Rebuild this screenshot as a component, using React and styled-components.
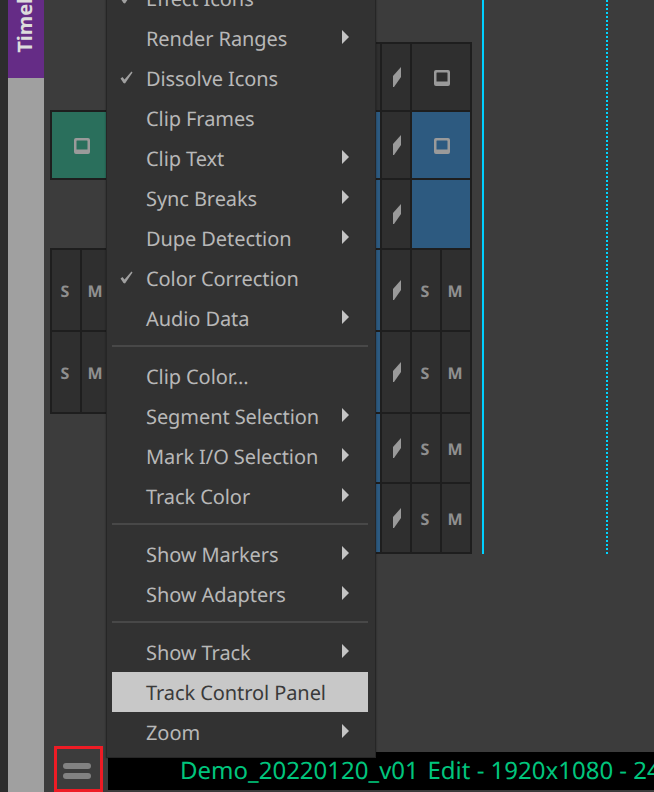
import React from "react";
import styled, { createGlobalStyle } from "styled-components";

const Global = createGlobalStyle`
  html, body { margin: 0; padding: 0; background: #3c3c3c; }
  #root { width: 654px; height: 792px; overflow: hidden; }
  * { box-sizing: border-box; }
`;

const Screen = styled.div`
  position: relative;
  display: flex;
  width: 654px;
  height: 792px;
  overflow: hidden;
  background: #3c3c3c;
  font-family: "Noto Sans", sans-serif;
  text-rendering: geometricPrecision;
`;

const Gutter = styled.div`
  width: 8px;
  background: #2d2d2d;
`;

const SideRail = styled.div`
  display: flex;
  flex-direction: column;
  width: 36px;
  background: #a0a0a0;
`;

const RailTab = styled.div`
  display: flex;
  align-items: flex-end;
  justify-content: center;
  height: 78px;
  padding: 0 3px 25px 0;
  background: #652c86;
  overflow: hidden;
`;

const RailLabel = styled.span`
  writing-mode: vertical-rl;
  transform: rotate(180deg);
  color: #dcdcdc;
  font-family: "Noto Sans", sans-serif;
  font-weight: 700;
  font-size: 20px;
  line-height: 20px;
  white-space: nowrap;
`;

const Workspace = styled.div`
  flex: 1;
  display: flex;
  flex-direction: column;
  min-width: 0;
`;

const Timeline = styled.div`
  flex: 1;
  display: flex;
  align-items: flex-start;
  padding-left: 6px;
`;

const TrackPanel = styled.div`
  display: flex;
  flex-direction: column;
  flex: none;
  width: ${(p) => p.$width}px;
  margin-top: ${(p) => p.$top}px;
  margin-left: ${(p) => p.$left || 0}px;
  background: #1e1e1e;
  padding: 2px;
  gap: 2px;
`;

const TrackRow = styled.div`
  display: flex;
  height: ${(p) => p.$height}px;
  gap: 2px;
`;

const Spacer = styled.div`
  height: ${(p) => p.$height}px;
  margin: 0 -2px;
  background: #3c3c3c;
`;

const Cell = styled.div`
  display: flex;
  align-items: center;
  justify-content: center;
  flex: ${(p) => (p.$width ? `none` : 1)};
  width: ${(p) => (p.$width ? `${p.$width}px` : "auto")};
  background: ${(p) => p.$bg || "#2f2f2f"};
`;

const SlashCell = styled(Cell)`
  padding-left: 2px;
`;

const IconCell = styled(Cell)`
  padding: 2px 0 0 2px;
`;

const ToggleCell = styled(Cell)`
  padding: 2px 2px 0 0;
  color: #8f8f8f;
  font-family: "Open Sans", sans-serif;
  font-weight: 700;
  font-size: 16px;
`;

const Marker = styled.div`
  flex: none;
  width: 2px;
  height: 554px;
  margin-left: ${(p) => p.$left}px;
  ${(p) =>
    p.$dotted
      ? "background: repeating-linear-gradient(to bottom, #00d4ff 0 2px, transparent 2px 4px);"
      : "background: #00d0ff;"}
`;

const StatusRow = styled.div`
  display: flex;
  height: 40px;
  flex: none;
  padding-left: 10px;
`;

const PanelButton = styled.div`
  display: flex;
  flex-direction: column;
  align-items: center;
  justify-content: center;
  gap: 4px;
  width: 49px;
  height: 46px;
  margin-top: -6px;
  padding: 4px 3px 0 0;
  border: 3px solid #ee1c25;
`;

const ButtonBar = styled.span`
  width: 28px;
  height: 6px;
  border-radius: 3px;
  background: #828282;
`;

const StatusTitle = styled.div`
  flex: 1;
  height: 38px;
  margin-left: 5px;
  margin-right: -4px;
  padding-left: 72px;
  background: #000;
  color: #00c57d;
  font-size: 24px;
  line-height: 38px;
  white-space: nowrap;
  overflow: hidden;
`;

const Menu = styled.div`
  position: absolute;
  left: 106px;
  top: -25px;
  width: 270px;
  padding: 2px 7px 5px 5px;
  background: #323232;
  border: 1px solid #262626;
  box-shadow: 0 0 2px rgba(0, 0, 0, 0.4);
`;

const Item = styled.div`
  position: relative;
  display: flex;
  align-items: center;
  height: 40px;
  padding-left: 34px;
  background: ${(p) => (p.$active ? "#c8c8c8" : "transparent")};
  color: ${(p) => (p.$active ? "#3a3a3a" : "#b8b8b8")};
  font-size: 20px;
  letter-spacing: -0.08px;
  white-space: nowrap;
`;

const Check = styled.svg`
  position: absolute;
  left: 8px;
  top: 13px;
  width: 13px;
  height: 13px;
`;

const Arrow = styled.span`
  position: absolute;
  right: 19px;
  top: 12px;
  width: 0;
  height: 0;
  border-left: 7px solid #c4c4c4;
  border-top: 7px solid transparent;
  border-bottom: 7px solid transparent;
`;

const Divider = styled.div`
  height: 2px;
  margin: 7px 0 9px;
  background: #484848;
`;

const TrackIcon = () => (
  <svg width="16" height="16" viewBox="0 0 16 16">
    <path
      fillRule="evenodd"
      d="M2 0 H14 A2 2 0 0 1 16 2 V14 A2 2 0 0 1 14 16 H2 A2 2 0 0 1 0 14 V2 A2 2 0 0 1 2 0 Z M3 2.5 A0.5 0.5 0 0 0 2.5 3 V11.5 H13.5 V3 A0.5 0.5 0 0 0 13 2.5 Z"
      fill="#9a9a9a"
    />
  </svg>
);

const Slash = () => (
  <svg width="8" height="20" viewBox="0 0 8 20">
    <path d="M8 0 L8 10 L1 20 L0 20 L0 9 Z" fill="#9a9a9a" />
  </svg>
);

const menuGroups = [
  [
    { label: "Effect Icons", checked: true },
    { label: "Render Ranges", sub: true },
    { label: "Dissolve Icons", checked: true },
    { label: "Clip Frames" },
    { label: "Clip Text", sub: true },
    { label: "Sync Breaks", sub: true },
    { label: "Dupe Detection", sub: true },
    { label: "Color Correction", checked: true },
    { label: "Audio Data", sub: true },
  ],
  [
    { label: "Clip Color..." },
    { label: "Segment Selection", sub: true },
    { label: "Mark I/O Selection", sub: true },
    { label: "Track Color", sub: true },
  ],
  [
    { label: "Show Markers", sub: true },
    { label: "Show Adapters", sub: true },
  ],
  [
    { label: "Show Track", sub: true },
    { label: "Track Control Panel", active: true },
    { label: "Zoom", sub: true },
  ],
];

const BLUE = "#2d5a80";
const GREEN = "#2a6f5c";

const SoloMuteRow = ({ height }) => (
  <TrackRow $height={height}>
    <Cell $width={38} $bg={BLUE} />
    <SlashCell $width={28}><Slash /></SlashCell>
    <ToggleCell>S</ToggleCell>
    <ToggleCell>M</ToggleCell>
  </TrackRow>
);

export default function App() {
  return (
    <Screen>
      <Global />
      <Gutter />
      <SideRail>
        <RailTab>
          <RailLabel>Timeline</RailLabel>
        </RailTab>
      </SideRail>
      <Workspace>
        <Timeline>
          <TrackPanel $width={62} $top={110}>
            <TrackRow $height={66}>
              <IconCell $bg={GREEN}><TrackIcon /></IconCell>
            </TrackRow>
            <Spacer $height={68} />
            <TrackRow $height={80}>
              <ToggleCell>S</ToggleCell>
              <ToggleCell>M</ToggleCell>
            </TrackRow>
            <TrackRow $height={80}>
              <ToggleCell>S</ToggleCell>
              <ToggleCell>M</ToggleCell>
            </TrackRow>
          </TrackPanel>
          <TrackPanel $width={132} $top={42} $left={228}>
            <TrackRow $height={66}>
              <Cell $width={38} />
              <SlashCell $width={28}><Slash /></SlashCell>
              <IconCell><TrackIcon /></IconCell>
            </TrackRow>
            <TrackRow $height={66}>
              <Cell $width={38} $bg={BLUE} />
              <SlashCell $width={28}><Slash /></SlashCell>
              <IconCell $bg={BLUE}><TrackIcon /></IconCell>
            </TrackRow>
            <TrackRow $height={68}>
              <Cell $width={38} $bg={BLUE} />
              <SlashCell $width={28}><Slash /></SlashCell>
              <Cell $bg={BLUE} />
            </TrackRow>
            <SoloMuteRow height={80} />
            <SoloMuteRow height={80} />
            <SoloMuteRow height={68} />
            <SoloMuteRow height={68} />
          </TrackPanel>
          <Marker $left={10} />
          <Marker $left={122} $dotted />
        </Timeline>
        <StatusRow>
          <PanelButton>
            <ButtonBar />
            <ButtonBar />
          </PanelButton>
          <StatusTitle>{"Demo_20220120_v01\u200A Edit - 1920x1080 - 24"}</StatusTitle>
        </StatusRow>
      </Workspace>
      <Menu>
        {menuGroups.map((group, g) => (
          <React.Fragment key={g}>
            {g > 0 && <Divider />}
            {group.map((it) => (
              <Item key={it.label} $active={it.active}>
                {it.checked && (
                  <Check viewBox="0 0 13 13">
                    <path d="M0.5 7.5 L2.5 6 L4.5 8.5 L11.5 0.5 L12.5 1.5 L5 12.5 L3.5 12 Z" fill="#a0a0a0" />
                  </Check>
                )}
                {it.label}
                {it.sub && <Arrow />}
              </Item>
            ))}
          </React.Fragment>
        ))}
      </Menu>
    </Screen>
  );
}
